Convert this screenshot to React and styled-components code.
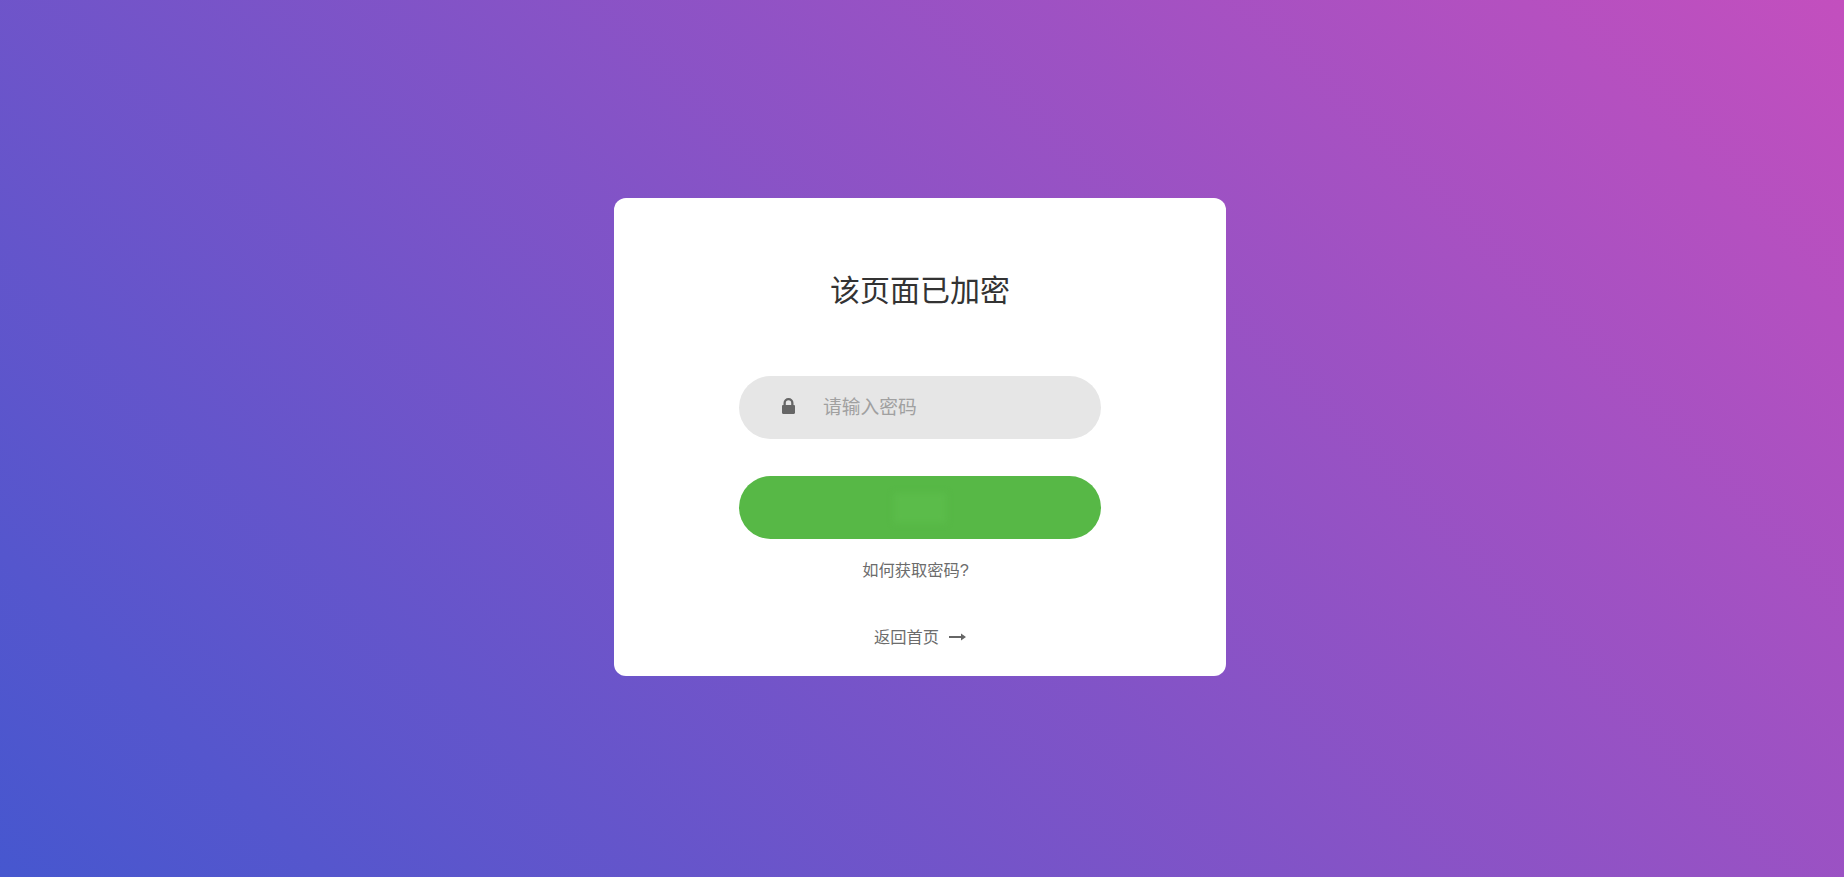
import React from "react";
import styled, { createGlobalStyle } from "styled-components";

const GlobalStyle = createGlobalStyle`
  * {
    box-sizing: border-box;
  }

  html,
  body {
    margin: 0;
    padding: 0;
    height: 100%;
  }

  body {
    font-family: "Liberation Sans", "Noto Sans CJK SC", sans-serif;
  }
`;

const Page = styled.div`
  display: flex;
  align-items: center;
  justify-content: center;
  width: 100%;
  height: 100vh;
  padding: 0 4px 3px 0;
  background: linear-gradient(-135deg, #c34fbe, #4657cf);
`;

const Card = styled.div`
  display: flex;
  flex-direction: column;
  align-items: center;
  width: 612px;
  height: 478px;
  padding-top: 72px;
  background: #fff;
  border-radius: 12px;
  overflow: hidden;
`;

const Title = styled.h1`
  margin: 0 0 64px;
  font-size: 30px;
  font-weight: 400;
  line-height: 42px;
  color: #333;
`;

const Field = styled.label`
  display: flex;
  align-items: center;
  width: 362px;
  height: 63px;
  padding-left: 43px;
  background: #e6e6e6;
  border-radius: 32px;
`;

const LockSvg = styled.svg`
  flex: none;
  width: 13px;
  height: 16px;
  margin: -3px 28px 0 0;
`;

const Input = styled.input`
  flex: 1;
  min-width: 0;
  border: 0;
  outline: 0;
  padding: 0;
  background: transparent;
  font-family: inherit;
  font-size: 18.75px;
  color: #666;

  &::placeholder {
    color: #a0a0a0;
    opacity: 1;
  }
`;

const SubmitButton = styled.button`
  display: flex;
  align-items: center;
  justify-content: center;
  width: 362px;
  height: 63px;
  margin-top: 37px;
  padding: 0;
  border: 0;
  background: #57b846;
  border-radius: 32px;
`;

// the button label is blurred out in the picture, only a faint patch is left
const BlurredLabel = styled.span`
  display: block;
  width: 52px;
  height: 30px;
  background: #5bbc4a;
  filter: blur(3px);
`;

const HelpLink = styled.a`
  margin-top: 19px;
  padding-right: 9px;
  font-size: 16.25px;
  line-height: 24px;
  color: #6c6c6c;
  text-decoration: none;
`;

const BackLink = styled.a`
  display: flex;
  align-items: center;
  gap: 10px;
  margin-top: 43px;
  font-size: 16.25px;
  line-height: 24px;
  color: #6c6c6c;
  text-decoration: none;
`;

const LockIcon = () => (
  <LockSvg viewBox="0 0 13 16" fill="#666">
    <path d="M1.500 7V5a5 5 0 0 1 10 0v2h.3c.7 0 1.200.5 1.200 1.200v6.600c0 .7-.5 1.200-1.200 1.200H1.200C.5 16 0 15.500 0 14.800V8.200C0 7.500.5 7 1.200 7zM3.800 7h5.400V5a2.700 2.700 0 0 0-5.400 0z" />
  </LockSvg>
);

const ArrowIcon = () => (
  <svg width="17" height="8" viewBox="0 0 17 8" fill="#666">
    <path d="M0 3h12V0.500L17 4l-5 3.500V5H0z" />
  </svg>
);

const App = () => {
  return (
    <>
      <GlobalStyle />
      <Page>
        <Card>
          <Title>该页面已加密</Title>
          <Field>
            <LockIcon />
            <Input type="password" placeholder="请输入密码" />
          </Field>
          <SubmitButton type="button">
            <BlurredLabel />
          </SubmitButton>
          <HelpLink href="#">如何获取密码?</HelpLink>
          <BackLink href="#">
            返回首页
            <ArrowIcon />
          </BackLink>
        </Card>
      </Page>
    </>
  );
};

export default App;
